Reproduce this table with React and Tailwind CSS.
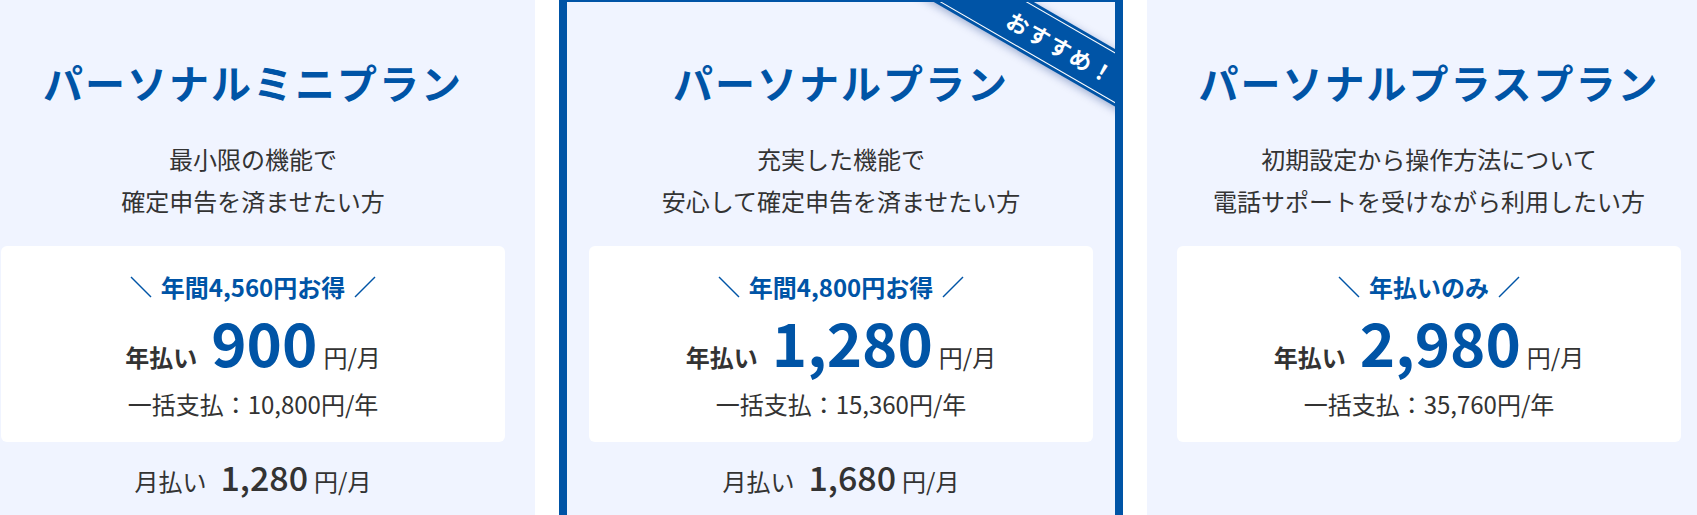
import React from "react";

const BLUE = "text-[#0054a6]";

function Slash({ dir }) {
  return (
    <svg width="22" height="22" viewBox="0 0 22 22" className="shrink-0">
      {dir === "left" ? (
        <line x1="1" y1="1" x2="21" y2="21" stroke="#0054a6" strokeWidth="1.4" />
      ) : (
        <line x1="21" y1="1" x2="1" y2="21" stroke="#0054a6" strokeWidth="1.4" />
      )}
    </svg>
  );
}

function Card({ title, lines, deal, price, yearly, monthly, featured }) {
  return (
    <div
      className={
        "relative w-[564px] h-[560px] shrink-0 border-8 bg-[#f0f4ff] px-[22px] pt-[50px] flex flex-col items-center " +
        (featured ? "border-[#0054a6] overflow-hidden" : "border-transparent")
      }
    >
      {featured && (
        <div className="absolute left-[343px] top-[19px] w-[300px] h-[50px] rotate-[30deg] bg-[#0054a6] shadow-[0_2px_8px_rgba(0,40,120,0.35)] flex items-center justify-center z-10">
          <div className="absolute inset-x-0 top-[3px] bottom-[3px] border-y border-white"></div>
          <span className="text-white text-[22px] font-bold tracking-[0.1em] leading-none pl-[4px]">おすすめ！</span>
        </div>
      )}
      <h2 className={"text-[40px] leading-[60px] font-bold tracking-[0.05em] " + BLUE}>{title}</h2>
      <p className="mt-[26px] text-[24px] leading-[42px] text-center text-[#333]">
        {lines[0]}
        <br />
        {lines[1]}
      </p>
      <div className="mt-[24px] w-full bg-white rounded-md pt-[25px] pb-[22px] flex flex-col items-center">
        <div className="flex items-center gap-[9px] h-[32px]">
          <Slash dir="left" />
          <span className={"text-[24px] leading-[32px] font-bold " + BLUE}>{deal}</span>
          <Slash dir="right" />
        </div>
        <div className="mt-[8px] flex items-baseline text-[#333]">
          <span className="text-[24px] leading-none font-bold">年払い</span>
          <span className={"ml-[14px] text-[60px] leading-none font-bold " + BLUE}>{price}</span>
          <span className="ml-[6px] text-[24px] leading-none">円/月</span>
        </div>
        <div className="mt-[17px] text-[24px] leading-[32px] text-[#333]">一括支払：{yearly}円/年</div>
      </div>
      {monthly && (
        <div className="mt-[18px] flex items-baseline text-[#333]">
          <span className="text-[24px] leading-none">月払い</span>
          <span className="ml-[14px] text-[34px] leading-none font-medium">{monthly}</span>
          <span className="ml-[6px] text-[24px] leading-none">円/月</span>
        </div>
      )}
    </div>
  );
}

export default function App() {
  return (
    <div className="w-[1697px] h-[515px] overflow-hidden bg-white font-['Noto_Sans_CJK_JP','Noto_Sans',sans-serif]">
      <div className="flex gap-[24px] ml-[-29px] mt-[-6px]">
        <Card
          title="パーソナルミニプラン"
          lines={["最小限の機能で", "確定申告を済ませたい方"]}
          deal="年間4,560円お得"
          price="900"
          yearly="10,800"
          monthly="1,280"
        />
        <Card
          featured
          title="パーソナルプラン"
          lines={["充実した機能で", "安心して確定申告を済ませたい方"]}
          deal="年間4,800円お得"
          price="1,280"
          yearly="15,360"
          monthly="1,680"
        />
        <Card
          title="パーソナルプラスプラン"
          lines={["初期設定から操作方法について", "電話サポートを受けながら利用したい方"]}
          deal="年払いのみ"
          price="2,980"
          yearly="35,760"
        />
      </div>
    </div>
  );
}
